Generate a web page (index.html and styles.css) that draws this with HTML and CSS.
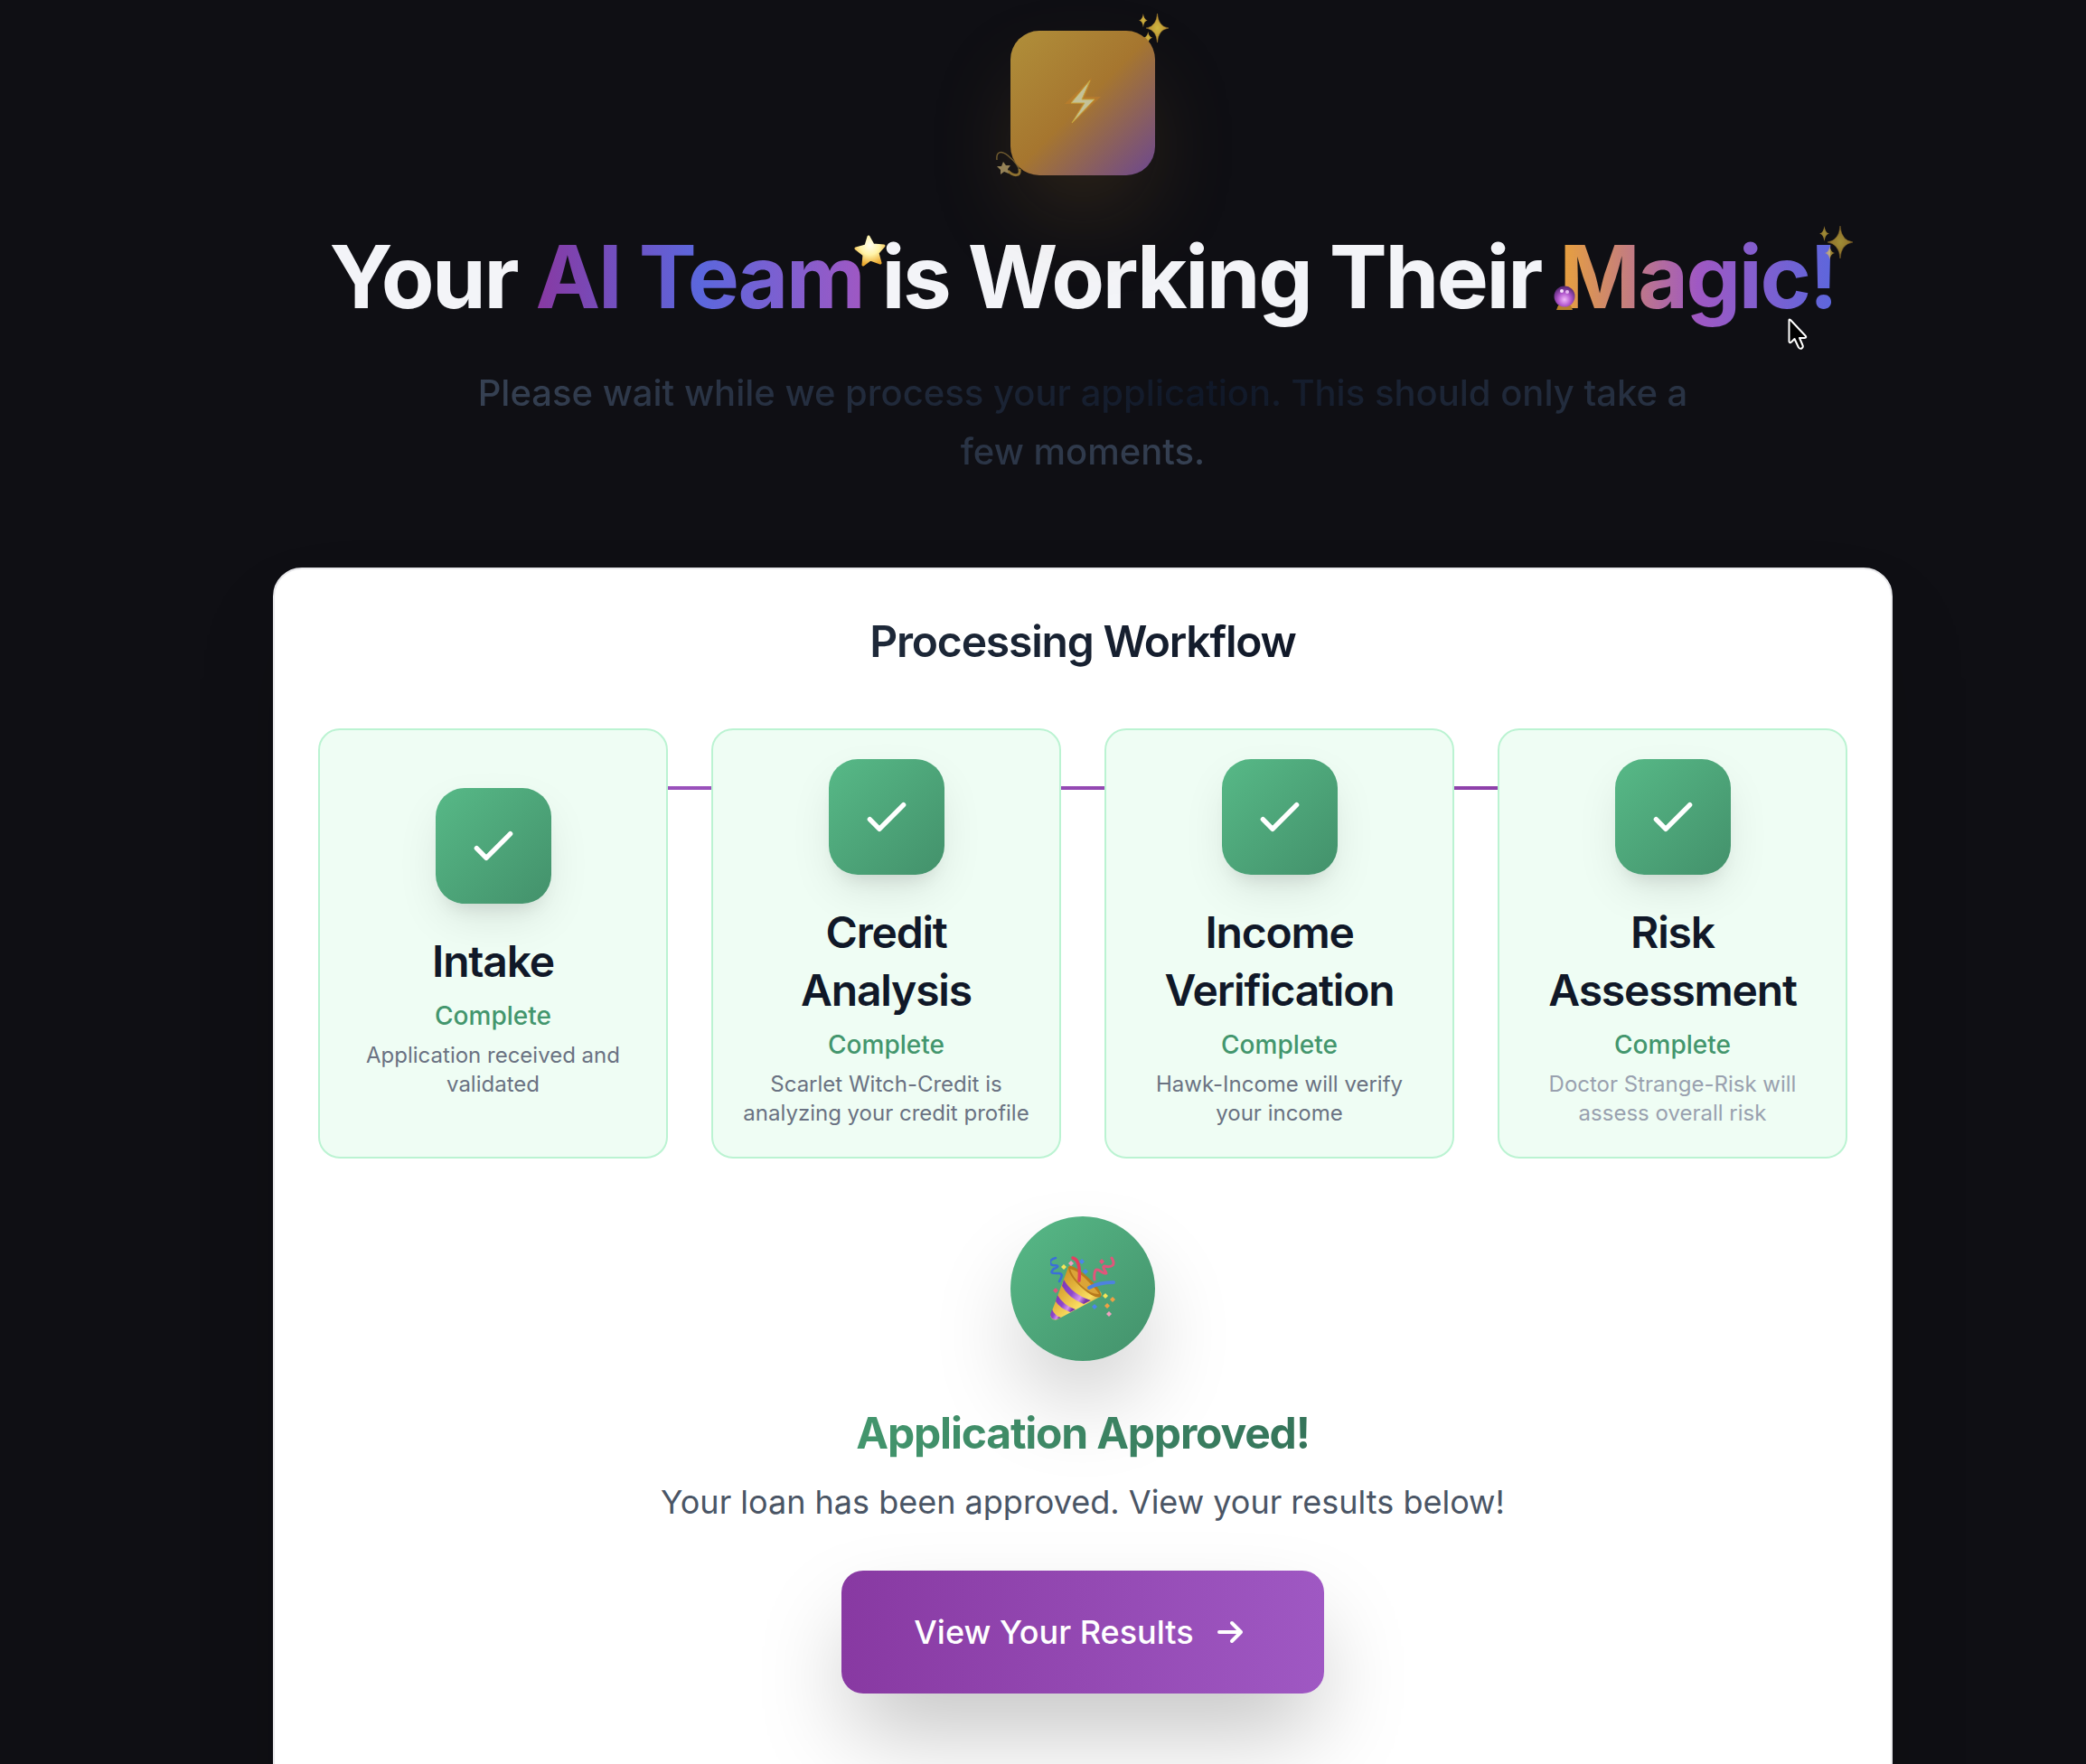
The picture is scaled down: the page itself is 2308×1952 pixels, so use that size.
FILE: index.html
```html
<!DOCTYPE html>
<html lang="en">
<head>
<meta charset="utf-8">
<title>Processing your application</title>
<link rel="stylesheet" href="styles.css">
</head>
<body>
<svg class="defs" aria-hidden="true">
  <defs>
    <radialGradient id="spark">
      <stop offset="0" stop-color="#ffe14d"/><stop offset="1" stop-color="#e0a838"/>
    </radialGradient>
    <radialGradient id="star" cx="0.5" cy="0.3" r="0.7">
      <stop offset="0" stop-color="#fffef0"/><stop offset="0.5" stop-color="#fff3a6"/><stop offset="1" stop-color="#eba92f"/>
    </radialGradient>
    <radialGradient id="orb" cx="0.5" cy="0.65" r="0.6">
      <stop offset="0" stop-color="#f0b8f8"/><stop offset="0.5" stop-color="#b55ad0"/><stop offset="1" stop-color="#5c2a78"/>
    </radialGradient>
    <linearGradient id="cone" x1="0" y1="0.2" x2="0.7" y2="1">
      <stop offset="0" stop-color="#c78a20"/><stop offset="0.4" stop-color="#e2b23c"/><stop offset="0.75" stop-color="#fbe063"/><stop offset="1" stop-color="#b8801e"/>
    </linearGradient>
    <linearGradient id="band" x1="0" y1="0" x2="1" y2="0.5">
      <stop offset="0" stop-color="#7a35b8"/><stop offset="0.5" stop-color="#8f48cc"/><stop offset="0.8" stop-color="#d492ec"/><stop offset="1" stop-color="#7a35a8"/>
    </linearGradient>
    <symbol id="sparkles" viewBox="0 0 37 37">
      <g fill="url(#spark)">
        <path d="M23 0Q24 16 37 18Q24 20 23 36Q22 20 9 18Q22 16 23 0Z" stroke="#d9a838" stroke-width="0.500"/>
        <path d="M5.500 0Q6.500 8 11 8.500Q6.500 9 5.500 17Q4.500 9 0 8.500Q4.500 8 5.500 0Z"/>
        <path d="M11.500 22.500Q12.500 29 17 30Q12.500 31 11.500 37Q10.500 31 6 30Q10.500 29 11.500 22.500Z"/>
      </g>
    </symbol>
    <symbol id="check" viewBox="0 0 24 24">
      <path d="M5 13l4 4L19 7" fill="none" stroke="#fff" stroke-width="2" stroke-linecap="round" stroke-linejoin="round"/>
    </symbol>
  </defs>
</svg>

<main class="page">
  <header class="hero">
    <div class="badge">
      <svg class="bolt" viewBox="0 0 44 56" aria-hidden="true">
        <path d="M32 0L2 29H21L9 52L42 21H25Z" fill="#c5802a" opacity="0.5"/>
        <path d="M30 3L9 28H24L10 50L35 24H21Z" fill="#c4c299" stroke="#c6a83f" stroke-width="1"/>
      </svg>
      <svg class="badge-sparkles" aria-hidden="true"><use href="#sparkles"/></svg>
      <svg class="badge-dizzy" viewBox="0 0 30 30" aria-hidden="true">
        <path d="M2 10C1 1 6 -1 14 5C20 10 27 17 27 23" fill="none" stroke="#6d5a30" stroke-width="1.500"/>
        <path d="M27 20C29 29 20 28 14 22" fill="none" stroke="#8d7132" stroke-width="3"/>
        <path d="M9 12L12 16L17 16L14 20L15 25L10 23L6 26L6 21L2 17L7 17Z" fill="#94835a"/>
      </svg>
    </div>
    <h1 class="title">Your <span class="team">AI Team<svg class="title-star" viewBox="0 0 36 36" aria-hidden="true"><path d="M16 2L21 11L33 12L26 20L29 31L18 27L10 33L11 22L2 15L13 12Z" fill="url(#star)" stroke="url(#star)" stroke-width="3" stroke-linejoin="round"/></svg></span> is Working Their <span class="magic">Magic!<svg class="title-sparkles" aria-hidden="true"><use href="#sparkles"/></svg><svg class="title-orb" viewBox="0 0 24 28" aria-hidden="true"><path d="M5 22H19L21 27H3Z" fill="#b5802a"/><circle cx="12" cy="12" r="11.500" fill="url(#orb)"/><ellipse cx="9" cy="6" rx="2" ry="2" fill="#f6e2fb"/><ellipse cx="15" cy="7" rx="2" ry="2" fill="#e6b8f0"/></svg></span></h1>
    <p class="subtitle"><span class="subtitle-text">Please wait while we process your application. This should only take a few moments.</span></p>
  </header>

  <section class="card">
    <h2 class="card-title"><span class="card-title-text">Processing Workflow</span></h2>
    <ol class="steps">
      <li class="step">
        <span class="step-icon"><svg class="check" aria-hidden="true"><use href="#check"/></svg></span>
        <h3 class="step-name">Intake</h3>
        <p class="step-status">Complete</p>
        <p class="step-text">Application received and validated</p>
      </li>
      <li class="step">
        <span class="step-icon"><svg class="check" aria-hidden="true"><use href="#check"/></svg></span>
        <h3 class="step-name">Credit Analysis</h3>
        <p class="step-status">Complete</p>
        <p class="step-text">Scarlet Witch-Credit is analyzing your credit profile</p>
      </li>
      <li class="step">
        <span class="step-icon"><svg class="check" aria-hidden="true"><use href="#check"/></svg></span>
        <h3 class="step-name">Income Verification</h3>
        <p class="step-status">Complete</p>
        <p class="step-text">Hawk-Income will verify your income</p>
      </li>
      <li class="step">
        <span class="step-icon"><svg class="check" aria-hidden="true"><use href="#check"/></svg></span>
        <h3 class="step-name">Risk Assessment</h3>
        <p class="step-status">Complete</p>
        <p class="step-text step-text-muted">Doctor Strange-Risk will assess overall risk</p>
      </li>
    </ol>

    <div class="result">
      <div class="party">
        <svg class="popper" viewBox="0 0 72 72" aria-hidden="true">
          <path d="M20 12Q22 9 27 13L56 40Q58 43 55 45L8 70Q2 72 0 66Z" fill="url(#cone)"/>
          <path d="M20 12Q24 8 40 22Q58 38 56 45Q50 48 36 36Q20 22 20 12Z" fill="#b87a1c"/>
          <path d="M22 14Q30 16 38 24Q52 38 54 42Q44 42 34 32Q24 22 22 14Z" fill="#dba437"/>
          <path d="M15 26Q24 42 45 49L37 53Q20 46 13 33Z" fill="url(#band)"/>
          <path d="M8 43Q14 54 28 59L22 62Q10 57 6 50Z" fill="url(#band)"/>
          <path d="M2 59Q5 66 12 68L7 70Q1 71 0 65Z" fill="url(#band)"/>
          <g fill="none" stroke-linecap="round">
            <path d="M6 2C-2 4 -1 9 3 10C10 10 10 12 4 14C-2 20 4 19 10 19C15 20 12 24 10 28" stroke="#3b6fd8" stroke-width="2.500"/>
            <path d="M25 2Q34 4 32 27" stroke="#e23f60" stroke-width="3.500"/>
            <path d="M68 2C73 10 68 13 60 11C56 12 63 18 62 19C58 21 53 12 50 16Q48 20 49 26" stroke="#e0567b" stroke-width="3"/>
            <path d="M43 35Q54 29 70 29" stroke="#4d82df" stroke-width="4"/>
          </g>
          <g fill="#4a86ec"><path d="M35 3l3 3l-3 3l-3-3z"/><path d="M39 14l3 3l-3 3l-3-3z"/><path d="M49 53l3 3l-3 3l-3-3z"/></g>
          <g fill="#e2557c"><path d="M57 3l3 3l-3 3l-3-3z"/><path d="M6 35l3 3l-3 3l-3-3z"/></g>
          <g fill="#f0a0c0"><path d="M23 5l3 3l-3 3l-3-3z"/><path d="M65 61l3 3l-3 3l-3-3z"/></g>
          <g fill="#f6e558"><path d="M15 9l3 3l-3 3l-3-3z"/><path d="M61 41l3 3l-3 3l-3-3z"/></g>
          <g fill="#efa044"><path d="M69 45l3 3l-3 3l-3-3z"/><path d="M63 52l3 3l-3 3l-3-3z"/></g>
        </svg>
      </div>
      <h2 class="result-title">Application Approved!</h2>
      <p class="result-text">Your loan has been approved. View your results below!</p>
      <button class="cta" type="button">View Your Results
        <svg class="arrow" viewBox="0 0 24 24" aria-hidden="true"><path d="M13 7l5 5m0 0l-5 5m5-5H6" fill="none" stroke="#fff" stroke-width="2" stroke-linecap="round" stroke-linejoin="round"/></svg>
      </button>
    </div>
  </section>
</main>

<svg class="pointer" viewBox="0 0 22 36" aria-hidden="true"><path d="M1.500 2V26Q2 28 4 26.500L7.500 23L12 32.500Q13.500 34.500 15.500 33.500Q17.500 32 16.500 30L13 22H18.500Q21.500 21.500 19.500 19.500L3 2Q1.500 1 1.500 2Z" fill="#000" stroke="#fff" stroke-width="2" stroke-linejoin="round"/></svg>
</body>
</html>
```

FILE: styles.css
```css
* {
  box-sizing: border-box;
  margin: 0;
  padding: 0;
}

body {
  background: #0f0f14;
  color: #101828;
  font-family: Inter, "Liberation Sans", sans-serif;
}

html {
  scrollbar-width: none;
}

.defs {
  position: absolute;
  width: 0;
  height: 0;
}

.page {
  display: flex;
  flex-direction: column;
  align-items: center;
  gap: 96px;
  padding: 34px 0 0 88px;
}

.hero {
  display: flex;
  flex-direction: column;
  align-items: center;
  text-align: center;
}

.badge {
  position: relative;
  display: flex;
  align-items: center;
  justify-content: center;
  width: 160px;
  height: 160px;
  margin-bottom: 64px;
  border-radius: 32px;
  background: linear-gradient(135deg, #b08f3a 0%, #a6762f 50%, #6c4790 100%);
  box-shadow: 0 48px 100px -12px rgba(166, 118, 47, 0.22);
}

.bolt {
  width: 44px;
  height: 56px;
}

.badge-sparkles {
  position: absolute;
  z-index: -1;
  top: -19px;
  right: -15px;
  width: 33px;
  height: 33px;
  opacity: 0.8;
}

.badge-dizzy {
  position: absolute;
  z-index: -1;
  left: -17px;
  bottom: -3px;
  width: 30px;
  height: 30px;
}

.title {
  color: #f3f4f8;
  font-size: 96px;
  font-weight: 700;
  line-height: 96px;
  letter-spacing: -0.025em;
  white-space: nowrap;
  margin-bottom: 48px;
}

.team,
.magic {
  position: relative;
  color: transparent;
  -webkit-background-clip: text;
  background-clip: text;
}

.team {
  background-image: linear-gradient(90deg, #8839a2, #5b67dd 50%, #9f58c3);
}

.magic {
  background-image: linear-gradient(90deg, #e9a23b, #9f58c3 50%, #5b67dd);
}

.title-star {
  position: absolute;
  top: 12px;
  right: -26px;
  width: 36px;
  height: 36px;
}

.title-sparkles {
  position: absolute;
  top: 2px;
  right: -18px;
  width: 37px;
  height: 37px;
  opacity: 0.6;
}

.title-orb {
  position: absolute;
  left: -6px;
  bottom: 20px;
  width: 24px;
  height: 28px;
}

.subtitle {
  max-width: 1344px;
  font-size: 40px;
  font-weight: 500;
  line-height: 65px;
}

.subtitle-text {
  color: transparent;
  background: linear-gradient(90deg, #364153, #101828 50%, #364153);
  -webkit-background-clip: text;
  background-clip: text;
}

.card {
  width: 100%;
  max-width: 1792px;
  padding: 48px 48px 96px;
  border: 2px solid #e9e9ec;
  border-radius: 32px;
  background: #fff;
  box-shadow: 0 50px 100px -24px rgba(0, 0, 0, 0.25);
}

.card-title {
  margin-bottom: 64px;
  font-size: 48px;
  font-weight: 600;
  line-height: 64px;
  letter-spacing: -0.025em;
  text-align: center;
}

.card-title-text {
  color: transparent;
  background: linear-gradient(90deg, #1e2939, #101828);
  -webkit-background-clip: text;
  background-clip: text;
}

.steps {
  display: grid;
  grid-template-columns: repeat(4, 1fr);
  gap: 48px;
  list-style: none;
  background: linear-gradient(90deg, #9f58c3, #8839a2) 0 64px / 100% 4px no-repeat;
}

.step {
  display: flex;
  flex-direction: column;
  align-items: center;
  justify-content: center;
  padding: 32px;
  border: 2px solid #bbf3d2;
  border-radius: 24px;
  background: #effdf4;
  text-align: center;
}

.step-icon {
  display: flex;
  align-items: center;
  justify-content: center;
  width: 128px;
  height: 128px;
  margin-bottom: 32px;
  border-radius: 32px;
  background: linear-gradient(135deg, #57b987, #43916b);
  box-shadow: 0 20px 50px -6px rgba(0, 0, 0, 0.1), 0 16px 20px -12px rgba(0, 0, 0, 0.1);
}

.check {
  width: 64px;
  height: 64px;
}

.step-name {
  font-size: 48px;
  font-weight: 600;
  line-height: 64px;
  letter-spacing: -0.025em;
  margin-bottom: 8px;
}

.step-status {
  color: #43966d;
  font-size: 28px;
  font-weight: 500;
  line-height: 40px;
  margin-bottom: 8px;
}

.step-text {
  color: #6a7282;
  font-size: 24px;
  line-height: 32px;
}

.step-text-muted {
  color: #99a1af;
}

.result {
  display: flex;
  flex-direction: column;
  align-items: center;
  padding: 64px 0;
}

.party {
  display: flex;
  align-items: center;
  justify-content: center;
  width: 160px;
  height: 160px;
  margin-bottom: 48px;
  border-radius: 50%;
  background: linear-gradient(135deg, #57b987, #43916b);
  box-shadow: 0 50px 100px -12px rgba(0, 0, 0, 0.22);
}

.popper {
  width: 72px;
  height: 72px;
}

.result-title {
  font-size: 48px;
  font-weight: 700;
  line-height: 64px;
  letter-spacing: -0.025em;
  margin-bottom: 16px;
  color: transparent;
  background: linear-gradient(90deg, #43966d, #35745a);
  -webkit-background-clip: text;
  background-clip: text;
}

.result-text {
  color: #4a5565;
  font-size: 36px;
  line-height: 56px;
  margin-bottom: 48px;
}

.cta {
  display: flex;
  align-items: center;
  gap: 16px;
  padding: 40px 80px;
  border: 0;
  border-radius: 24px;
  background: linear-gradient(90deg, #8839a2, #9f58c3);
  box-shadow: 0 50px 100px -12px rgba(0, 0, 0, 0.25);
  color: #fff;
  font-family: inherit;
  font-size: 36px;
  font-weight: 500;
  line-height: 56px;
}

.arrow {
  width: 48px;
  height: 48px;
}

.pointer {
  position: absolute;
  left: 1978px;
  top: 352px;
  width: 22px;
  height: 36px;
}
```
